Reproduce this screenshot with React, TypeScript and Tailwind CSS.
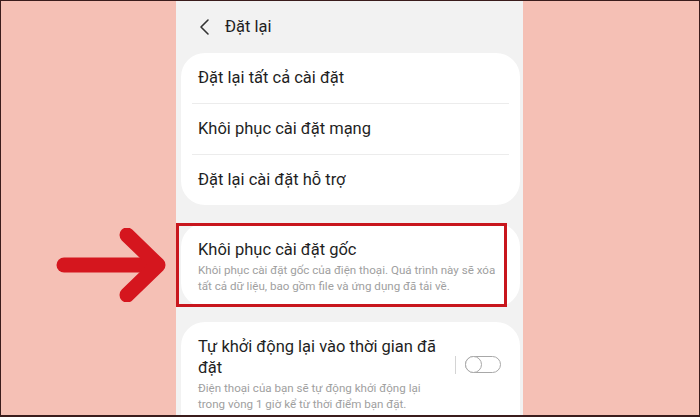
import React from "react";

const font = { fontFamily: "Roboto, 'Noto Sans', sans-serif" };

function Row({ text, divider }: { text: string; divider?: boolean }) {
  return (
    <div className="flex flex-col">
      <div className="h-[50px] flex items-center pl-[17px] text-[16.5px] text-[#1f1f1f]">{text}</div>
      {divider && <div className="mx-[11px] h-px bg-[#ececec]" />}
    </div>
  );
}

export default function App() {
  return (
    <div
      className="w-[700px] h-[417px] border-t border-x border-b-2 border-[#3a1c1c] bg-[#f5c0b5] flex overflow-hidden relative"
      style={font}
    >
      <div className="w-[175px] shrink-0 relative">
        <svg className="absolute left-[55px] top-[227px]" width="115" height="74" viewBox="0 0 115 74">
          <path d="M8 37 H100" stroke="#d5161e" strokeWidth="15" strokeLinecap="round" fill="none" />
          <path d="M71 7 L102 37 L71 67" stroke="#d5161e" strokeWidth="15" strokeLinecap="round" strokeLinejoin="round" fill="none" />
        </svg>
      </div>
      <div className="w-[347px] shrink-0 bg-[#f2f2f2] flex flex-col">
        <div className="h-[52px] shrink-0 flex items-center pl-[22px] gap-[15px] text-[16.5px] text-[#1f1f1f]">
          <svg width="12" height="18" viewBox="0 0 12 18">
            <path d="M10 2 L3 9 L10 16" stroke="#333" strokeWidth="1.6" fill="none" strokeLinecap="round" strokeLinejoin="round" />
          </svg>
          <span>Đặt lại</span>
        </div>
        <div className="ml-[5px] mr-[3px] bg-white rounded-[24px] flex flex-col">
          <Row text="Đặt lại tất cả cài đặt" divider />
          <Row text="Khôi phục cài đặt mạng" divider />
          <Row text="Đặt lại cài đặt hỗ trợ" />
        </div>
        <div className="mt-[18px] ml-[5px] mr-[3px] relative shrink-0">
          <div className="bg-white rounded-[24px] h-[84px] flex flex-col pl-[17px] pt-[16px]">
            <div className="text-[16.5px] leading-[22px] text-[#1f1f1f]">Khôi phục cài đặt gốc</div>
            <div className="text-[11.6px] leading-[15.5px] text-[#a0a0a0] mt-[2px]">
              Khôi phục cài đặt gốc của điện thoại. Quá trình này sẽ xóa
              <br />
              tất cả dữ liệu, bao gồm file và ứng dụng đã tải về.
            </div>
          </div>
          <div className="absolute left-[-5px] top-[0px] w-[331px] h-[84px] border-[3px] border-[#c8161d]" />
        </div>
        <div className="mt-[15px] ml-[5px] mr-[3px] bg-white rounded-t-[24px] flex-1 flex pl-[17px] pt-[14px]">
          <div className="flex-1 flex flex-col">
            <div className="text-[16.5px] leading-[21px] text-[#1f1f1f]">
              Tự khởi động lại vào thời gian đã
              <br />
              đặt
            </div>
            <div className="text-[11.6px] leading-[15.5px] text-[#a0a0a0] mt-[3px]">
              Điện thoại của bạn sẽ tự động khởi động lại
              <br />
              trong vòng 1 giờ kể từ thời điểm bạn đặt.
            </div>
          </div>
          <div className="flex items-start pt-[20px] pr-[19px] gap-[9px]">
            <div className="w-px h-[18px] bg-[#d4d4d4]" />
            <div className="w-[36px] h-[17px] rounded-full border border-[#a8a8a8] relative">
              <div className="absolute left-[-1px] top-[-1px] w-[17px] h-[17px] rounded-full border border-[#a8a8a8] bg-white" />
            </div>
          </div>
        </div>
      </div>
      <div className="flex-1" />
    </div>
  );
}
